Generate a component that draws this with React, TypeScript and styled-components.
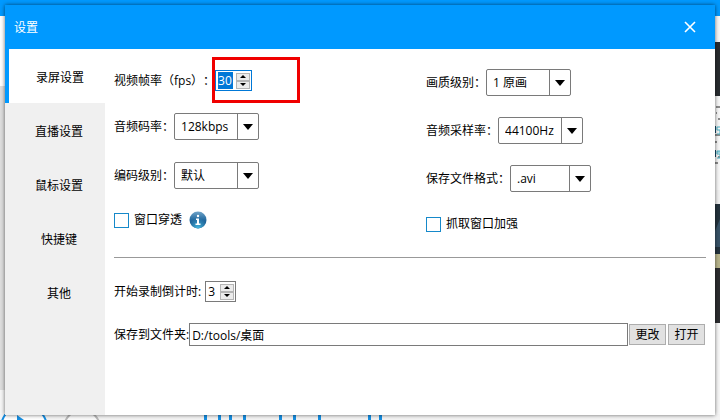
import React, { useState } from "react";
import styled, { createGlobalStyle } from "styled-components";

const blue = "#0099ff";
const line = "#7a7a7a";

const GlobalStyle = createGlobalStyle`
  *, *::before, *::after { box-sizing: border-box; }
  body { margin: 0; background: #fff; }
  body, button, input, select {
    font-family: "Open Sans", "Noto Sans CJK SC", sans-serif;
    font-size: 12px;
    line-height: 18px;
    color: #000;
    text-spacing-trim: space-all;
  }
`;

/* Recorder window that shows round the dialog */
const Desktop = styled.div`
  position: relative;
  display: flex;
  flex-direction: column;
  min-height: 100vh;
  overflow: hidden;
`;
const AppBar = styled.div`
  height: 16px;
  background: ${blue};
`;
const AppBody = styled.div`
  flex: 1;
  display: flex;
  justify-content: space-between;
`;
const LeftEdge = styled.div`
  width: 6px;
  background: linear-gradient(#fff 70px, #dedede 70px, #dedede 374px, #f6f6f6 374px);
`;
const AppFoot = styled.div`
  height: 6px;
  background: #f4f4f4;
  svg { display: block; }
`;

/* Dialog */
const Dialog = styled.section`
  position: absolute;
  inset: 5px;
  display: flex;
  flex-direction: column;
  background: #fff;
  box-shadow: 0 0 4px rgba(0, 0, 0, 0.6);
`;
const TitleBar = styled.header`
  display: flex;
  align-items: center;
  justify-content: space-between;
  height: 44px;
  padding: 0 17px 0 9px;
  background: ${blue};
  color: #fff;
`;
const Title = styled.h1`
  margin: 0;
  padding-top: 2px;
  font-size: 12px;
  font-weight: 400;
`;
const CloseButton = styled.button`
  display: flex;
  padding: 2px;
  border: 0;
  background: none;
`;
const DialogBody = styled.div`
  flex: 1;
  display: flex;
`;
const Tabs = styled.nav`
  width: 100px;
  background: #f0f0f0;
`;
const Tab = styled.button<{ $active: boolean }>`
  display: block;
  width: 100%;
  height: 54px;
  padding: 3px 0 0 ${(p) => (p.$active ? 6 : 8)}px;
  border: 0;
  border-left: ${(p) => (p.$active ? `4px solid ${blue}` : "0")};
  background: ${(p) => (p.$active ? "#fff" : "transparent")};
  text-align: center;
`;
const Panel = styled.form`
  flex: 1;
  padding: 20px 9px;
`;
const Columns = styled.div`
  display: grid;
  grid-template-columns: 312fr 280fr;
`;
const Row = styled.div`
  display: flex;
  align-items: center;
`;
const CheckRow = styled(Row)`
  gap: 7px;
  height: 18px;
`;
const LeftColumn = styled.div`
  display: flex;
  flex-direction: column;
  gap: 22px;
  padding-top: 1px;
`;
const RightColumn = styled.div`
  display: flex;
  flex-direction: column;
  gap: 21px;
  ${CheckRow} { height: 22px; }
`;
const FieldLabel = styled.label`
  white-space: nowrap;
`;

const SelectBox = styled.div<{ $width: number }>`
  display: grid;
  grid-template-columns: 1fr 21px;
  align-items: center;
  width: ${(p) => p.$width}px;
  height: 27px;
  border: 1px solid ${line};
  border-radius: 2px;
  background: #fff;
`;
const Select = styled.select`
  grid-area: 1 / 1 / 2 / 3;
  appearance: none;
  width: 100%;
  height: 25px;
  padding: 0 22px 0 6px;
  border: 0;
  background: none;
  outline: none;
`;
const ArrowCell = styled.span`
  grid-area: 1 / 2 / 2 / 3;
  display: flex;
  align-items: center;
  justify-content: center;
  height: 25px;
  border-left: 1px solid ${line};
  pointer-events: none;
`;

const SpinBox = styled.div<{ $focused?: boolean }>`
  display: flex;
  align-items: center;
  justify-content: space-between;
  height: 21px;
  padding: 1px 1px 1px 2px;
  border: 1px solid ${(p) => (p.$focused ? "#0078d7" : line)};
  background: #fff;
`;
const SpinInput = styled.input<{ $focused?: boolean }>`
  width: ${(p) => (p.$focused ? 15 : 9)}px;
  height: 17px;
  padding: 0;
  border: 0;
  outline: none;
  background: ${(p) => (p.$focused ? "#0078d7" : "#fff")};
  color: ${(p) => (p.$focused ? "#fff" : "#000")};
`;
const SpinButtons = styled.div`
  display: flex;
  flex-direction: column;
  margin-left: 3px;
`;
const SpinButton = styled.button`
  display: flex;
  align-items: center;
  justify-content: center;
  width: 14px;
  height: 8px;
  padding: 0;
  border: 1px solid #b5b5b5;
  background: #ececec;
`;
const FpsWrap = styled.div`
  position: relative;
`;
const Highlight = styled.div`
  position: absolute;
  top: -13px;
  left: -3px;
  width: 88px;
  height: 46px;
  border: 3px solid #f00000;
  pointer-events: none;
`;

const Check = styled.input`
  appearance: none;
  flex: none;
  width: 15px;
  height: 15px;
  margin: 0;
  border: 1px solid #1689ca;
  background: #fff;
  &:checked { background: #1689ca; }
`;
const CheckLabel = styled.label`
  margin-left: -2px;
`;
const Divider = styled.hr`
  height: 1px;
  margin: 22px 0 23px;
  border: 0;
  background: #999;
`;
const CountdownRow = styled(Row)`
  gap: 4px;
  margin-bottom: 21px;
`;
const PathRow = styled(Row)`
  padding-right: 1px;
`;
const PathInput = styled.input`
  flex: 1;
  min-width: 0;
  height: 23px;
  padding: 0 2px;
  border: 1px solid ${line};
  outline: none;
`;
const PushButton = styled.button`
  width: 37px;
  height: 21px;
  margin-left: 1px;
  padding: 0;
  border: 1px solid #adadad;
  background: #e1e1e1;
  line-height: 17px;
  & + & { margin-left: 2px; }
`;

function RightEdge() {
  return (
    <svg width="6" height="398" viewBox="0 0 6 398" aria-hidden="true">
      <rect width="6" height="398" fill="#f7f7f7" />
      <rect y="26" width="6" height="54" fill="#292c30" />
      <path d="M2 91h4M2 97h1M4 103h2M1 119h5M1 126h2M4 141h2M1 147h3" stroke="#222" strokeWidth="1" />
      <path d="M1 110v7M1 134v7M1 174v7" stroke="#164a69" strokeWidth="2" />
      <path d="M6 111H3v3h3v4H3M6 135H3v3h3v4H3M6 136H3" fill="none" stroke="#4bb0c4" />
      <rect y="174" width="6" height="14" fill="#f1f1f1" />
      <rect y="188" width="6" height="50" fill="#24333d" />
      <path d="M1 215l5-12v28H1z" fill="#385367" />
      <rect y="238" width="6" height="14" fill="#b8b48c" />
      <rect y="252" width="6" height="55" fill="#2c2d30" />
    </svg>
  );
}

function FooterDrawing() {
  return (
    <svg width="390" height="6" viewBox="0 0 390 6" aria-hidden="true">
      <circle cx="24" cy="14" r="23" fill="#fff" stroke="#168ee2" strokeWidth="2" />
      <path d="M17 1l7 5h-7z" fill="#168ee2" />
      <circle cx="82" cy="14" r="18" fill="#fafafa" stroke="#b9b9b9" strokeWidth="2" />
      {[204, 218, 229, 243, 279, 293, 318, 368, 379].map((x) => (
        <rect key={x} x={x} width="3" height="6" fill="#168ee2" />
      ))}
    </svg>
  );
}

function InfoIcon() {
  return (
    <svg width="18" height="18" viewBox="0 0 18 18" role="img" aria-label="说明">
      <defs>
        <linearGradient id="info" x1="0" y1="0" x2="0" y2="1">
          <stop offset="0" stopColor="#6fa3c8" />
          <stop offset="0.5" stopColor="#22699f" />
          <stop offset="1" stopColor="#174d7e" />
        </linearGradient>
        <radialGradient id="glow" cx="0.5" cy="1" r="0.6">
          <stop offset="0" stopColor="#45bce5" />
          <stop offset="1" stopColor="#45bce5" stopOpacity="0" />
        </radialGradient>
      </defs>
      <circle cx="9" cy="9" r="8.5" fill="url(#info)" />
      <circle cx="9" cy="9" r="8.5" fill="url(#glow)" />
      <circle cx="9" cy="5" r="1.2" fill="#fff" />
      <path d="M7 7.500h3v5h1.500V14h-5v-1.500H8V9H7z" fill="#fff" />
    </svg>
  );
}

interface SelectProps {
  id: string;
  label: string;
  options: string[];
  width?: number;
}

function SelectField({ id, label, options, width = 85 }: SelectProps) {
  return (
    <Row>
      <FieldLabel htmlFor={id}>{label}</FieldLabel>
      <SelectBox $width={width}>
        <Select id={id}>
          {options.map((o) => (
            <option key={o}>{o}</option>
          ))}
        </Select>
        <ArrowCell>
          <svg width="10" height="6" viewBox="0 0 10 6" aria-hidden="true">
            <path d="M0 0h10L5 6z" />
          </svg>
        </ArrowCell>
      </SelectBox>
    </Row>
  );
}

interface SpinnerProps {
  id: string;
  initial: number;
  focused?: boolean;
}

function Spinner({ id, initial, focused }: SpinnerProps) {
  const [value, setValue] = useState(initial);
  return (
    <SpinBox $focused={focused}>
      <SpinInput
        id={id}
        inputMode="numeric"
        value={value}
        $focused={focused}
        onChange={(e) => setValue(Number(e.target.value) || 0)}
      />
      <SpinButtons>
        <SpinButton type="button" aria-label="增加" onClick={() => setValue(value + 1)}>
          <svg width="6" height="3" viewBox="0 0 6 3" aria-hidden="true">
            <path d="M3 0l3 3H0z" />
          </svg>
        </SpinButton>
        <SpinButton type="button" aria-label="减少" onClick={() => setValue(value - 1)}>
          <svg width="6" height="3" viewBox="0 0 6 3" aria-hidden="true">
            <path d="M0 0h6L3 3z" />
          </svg>
        </SpinButton>
      </SpinButtons>
    </SpinBox>
  );
}

const tabs = ["录屏设置", "直播设置", "鼠标设置", "快捷键", "其他"];

export default function App() {
  const [active, setActive] = useState(tabs[0]);
  return (
    <Desktop>
      <GlobalStyle />
      <AppBar />
      <AppBody>
        <LeftEdge />
        <RightEdge />
      </AppBody>
      <AppFoot>
        <FooterDrawing />
      </AppFoot>
      <Dialog role="dialog" aria-labelledby="title">
        <TitleBar>
          <Title id="title">设置</Title>
          <CloseButton type="button" aria-label="关闭">
            <svg width="12" height="12" viewBox="0 0 12 12" aria-hidden="true">
              <path d="M1 1l10 10M11 1L1 11" stroke="#fff" strokeWidth="1.6" />
            </svg>
          </CloseButton>
        </TitleBar>
        <DialogBody>
          <Tabs>
            {tabs.map((t) => (
              <Tab key={t} type="button" $active={t === active} onClick={() => setActive(t)}>
                {t}
              </Tab>
            ))}
          </Tabs>
          <Panel onSubmit={(e) => e.preventDefault()}>
            <Columns>
              <LeftColumn>
                <Row>
                  <FieldLabel htmlFor="fps">视频帧率（fps）：</FieldLabel>
                  <FpsWrap>
                    <Spinner id="fps" initial={30} focused />
                    <Highlight />
                  </FpsWrap>
                </Row>
                <SelectField id="bitrate" label="音频码率：" options={["128kbps", "192kbps"]} />
                <SelectField id="encoding" label="编码级别：" options={["默认"]} />
                <CheckRow>
                  <Check id="through" type="checkbox" />
                  <CheckLabel htmlFor="through">窗口穿透</CheckLabel>
                  <InfoIcon />
                </CheckRow>
              </LeftColumn>
              <RightColumn>
                <SelectField id="quality" label="画质级别：" options={["1 原画"]} />
                <SelectField id="sample" label="音频采样率：" options={["44100Hz", "48000Hz"]} />
                <SelectField id="format" label="保存文件格式：" options={[".avi", ".mp4"]} width={81} />
                <CheckRow>
                  <Check id="grab" type="checkbox" />
                  <CheckLabel htmlFor="grab">抓取窗口加强</CheckLabel>
                </CheckRow>
              </RightColumn>
            </Columns>
            <Divider />
            <CountdownRow>
              <FieldLabel htmlFor="countdown">开始录制倒计时:</FieldLabel>
              <Spinner id="countdown" initial={3} />
            </CountdownRow>
            <PathRow>
              <FieldLabel htmlFor="folder">保存到文件夹:</FieldLabel>
              <PathInput id="folder" defaultValue="D:/tools/桌面" />
              <PushButton type="button">更改</PushButton>
              <PushButton type="button">打开</PushButton>
            </PathRow>
          </Panel>
        </DialogBody>
      </Dialog>
    </Desktop>
  );
}
